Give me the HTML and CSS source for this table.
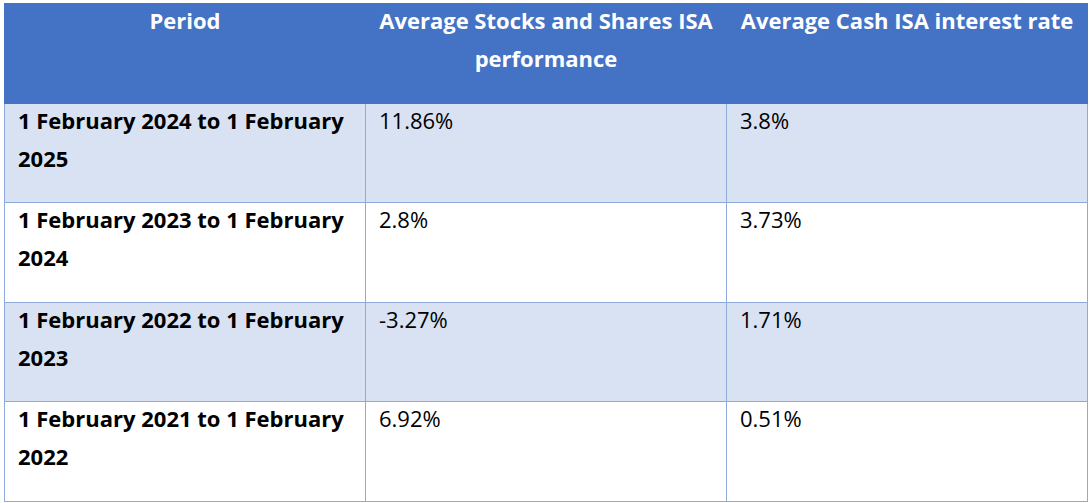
FILE: index.html
```html
<!DOCTYPE html>
<html lang="en">
<head>
<meta charset="utf-8">
<title>ISA performance</title>
<link rel="stylesheet" href="styles.css">
</head>
<body>
<table class="isa-table">
  <colgroup><col class="c"><col class="c"><col class="c"></colgroup>
  <thead>
    <tr class="head-row">
      <th><div class="txt">Period</div></th>
      <th><div class="txt">Average Stocks and Shares ISA performance</div></th>
      <th><div class="txt">Average Cash ISA interest rate</div></th>
    </tr>
  </thead>
  <tbody>
    <tr class="band">
      <td class="period"><div class="txt">1 February 2024 to 1 February 2025</div></td>
      <td><div class="txt">11.86%</div></td>
      <td><div class="txt">3.8%</div></td>
    </tr>
    <tr>
      <td class="period"><div class="txt">1 February 2023 to 1 February 2024</div></td>
      <td><div class="txt">2.8%</div></td>
      <td><div class="txt">3.73%</div></td>
    </tr>
    <tr class="band">
      <td class="period"><div class="txt">1 February 2022 to 1 February 2023</div></td>
      <td><div class="txt">-3.27%</div></td>
      <td><div class="txt">1.71%</div></td>
    </tr>
    <tr>
      <td class="period"><div class="txt">1 February 2021 to 1 February 2022</div></td>
      <td><div class="txt">6.92%</div></td>
      <td><div class="txt">0.51%</div></td>
    </tr>
  </tbody>
</table>
</body>
</html>
```
FILE: styles.css
```css
html, body {
  margin: 0;
  padding: 0;
  background: #ffffff;
}
body {
  padding: 3px 0 0 4px;
  font-family: "Open Sans", "Liberation Sans", sans-serif;
  font-size: 22px;
  line-height: 38px;
  color: #000000;
}
.isa-table {
  width: 1084px;
  border-collapse: collapse;
  table-layout: fixed;
}
.isa-table .c {
  width: 33.333%;
}
.isa-table th,
.isa-table td {
  border: 1px solid #8eaadb;
  vertical-align: top;
  text-align: left;
  padding: 0 12px 0 13px;
  height: 99.6px;
  box-sizing: border-box;
}
.txt {
  margin-top: -3px;
}
.head-row th {
  background: #4472c4;
  border-color: #4472c4;
  color: #ffffff;
  font-weight: 700;
  text-align: center;
  padding: 0 8px;
}
.band td {
  background: #d9e2f3;
}
.period {
  font-weight: 700;
}
```
